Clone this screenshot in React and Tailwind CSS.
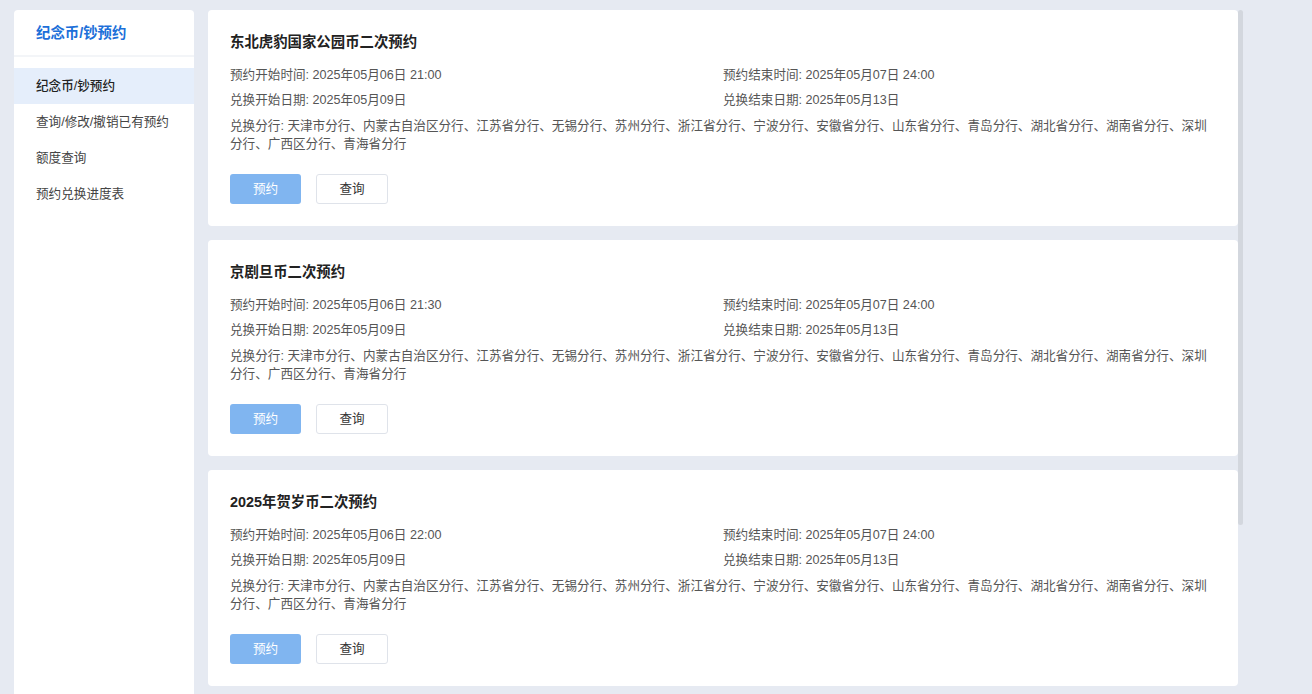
import { useState } from 'react';

const menu = ['纪念币/钞预约', '查询/修改/撤销已有预约', '额度查询', '预约兑换进度表'];

const branches =
  '天津市分行、内蒙古自治区分行、江苏省分行、无锡分行、苏州分行、浙江省分行、宁波分行、安徽省分行、山东省分行、青岛分行、湖北省分行、湖南省分行、深圳分行、广西区分行、青海省分行';

const items = [
  { title: '东北虎豹国家公园币二次预约', start: '2025年05月06日 21:00' },
  { title: '京剧旦币二次预约', start: '2025年05月06日 21:30' },
  { title: '2025年贺岁币二次预约', start: '2025年05月06日 22:00' },
  { title: '2025年贺岁钞二次预约', start: '2025年05月06日 22:30' },
];

function Card({ item }) {
  return (
    <div className="rounded-[4px] bg-white px-[22px] pb-[22px] pt-[22px]">
      <h2 className="text-[14.4px] font-bold leading-[20px] text-[#222]">{item.title}</h2>
      <div className="mt-[13px] grid grid-cols-2 text-[12.6px] leading-[20px] text-[#555]">
        <div>预约开始时间: {item.start}</div>
        <div>预约结束时间: 2025年05月07日 24:00</div>
        <div className="mt-[5px]">兑换开始日期: 2025年05月09日</div>
        <div className="mt-[5px]">兑换结束日期: 2025年05月13日</div>
      </div>
      <p className="mt-[7px] text-[12.6px] leading-[18px] text-[#555]">兑换分行: {branches}</p>
      <div className="mt-[21px] flex gap-[15px]">
        <button
          type="button"
          className="h-[30px] w-[71px] rounded-[3px] bg-[#80b5f0] text-[12.6px] text-white"
        >
          预约
        </button>
        <button
          type="button"
          className="h-[30px] w-[72px] rounded-[3px] border border-[#dfe3ea] bg-white text-[12.6px] text-[#333]"
        >
          查询
        </button>
      </div>
    </div>
  );
}

export default function App() {
  const [active, setActive] = useState(0);

  return (
    <div
      className="flex h-screen gap-[14px] overflow-hidden bg-[#e6eaf2] pl-[14px] pt-[10px]"
      style={{ fontFamily: '"Liberation Sans", "Noto Sans CJK SC", sans-serif' }}
    >
      <aside className="w-[180px] shrink-0 rounded-t-[4px] bg-white">
        <div className="h-[47px] border-b-2 border-[#f3f5f8] pl-[22px] pt-[13px] text-[14.4px] font-bold leading-[20px] text-[#1c6fd9]">
          纪念币/钞预约
        </div>
        <ul className="mt-[11px]">
          {menu.map((m, i) => (
            <li
              key={m}
              onClick={() => setActive(i)}
              className={
                i === active
                  ? 'flex h-[36px] cursor-pointer items-center bg-[#e5eefb] pl-[22px] text-[12.6px] font-medium text-[#222]'
                  : 'flex h-[36px] cursor-pointer items-center pl-[22px] text-[12.6px] text-[#444]'
              }
            >
              {m}
            </li>
          ))}
        </ul>
      </aside>

      <div className="relative w-[1036px] shrink-0">
        <main className="flex h-full w-[1030px] flex-col gap-[14px] overflow-hidden">
          {items.map((it) => (
            <div key={it.title} className="shrink-0">
              <Card item={it} />
            </div>
          ))}
        </main>
        {/* scrollbar thumb */}
        <div className="absolute right-[1px] top-0 h-[515px] w-[5px] rounded-[3px] bg-[#d3d7de]" />
      </div>
    </div>
  );
}
